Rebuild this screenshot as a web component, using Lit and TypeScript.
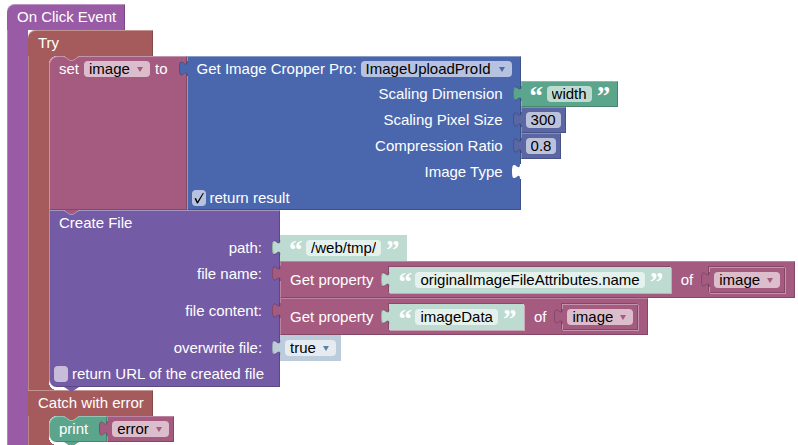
import { LitElement, html, css, svg, nothing } from "lit";
import { customElement } from "lit/decorators.js";

const notch = html`<svg class="notch" width="15" height="5" viewBox="0 0 15 5" aria-hidden="true">
  <path class="fill" d="M0 0L6 4H9L15 0Z" />
  <path class="edge" d="M0 .5L6 4.5H9L15 .5" />
</svg>`;

const foot = html`<svg class="foot" width="15" height="5" viewBox="0 0 15 5" aria-hidden="true">
  <path d="M0 0L6 4H9L15 0Z" />
</svg>`;

const tabShape = svg`<path class="fill" d="M8 15C8 5 0 23 0 7.5S8 10 8 0H9V15Z" />
  <path class="edge" d="M8 15C8 5 .5 23 .5 7.5S8 10 8 0" />`;
const tab = html`<svg class="tab" width="9" height="15" viewBox="0 0 9 15" aria-hidden="true">${tabShape}</svg>`;
const socket = html`<svg class="tab socket" width="9" height="15" viewBox="0 0 9 15" aria-hidden="true">${tabShape}</svg>`;

const pick = (value: string, name: string) => html`<span class="pick">
  <select aria-label=${name}><option>${value}</option></select>
  <svg width="6" height="5" viewBox="0 0 6 5" aria-hidden="true"><path d="M0 0H6L3 5Z" /></svg>
</span>`;

const field = (value: string, name: string) =>
  html`<input class="field" type="text" aria-label=${name} size=${value.length} .value=${value} />`;

const quoted = (value: string, name: string) => html`<span class="quote">“</span>${field(value, name)}<span class="quote">”</span>`;

const check = (text: string, on: boolean) => html`<label class="check">
  <span class="box">
    <input type="checkbox" ?checked=${on} />
    ${on
      ? html`<svg width="14" height="16" viewBox="0 0 14 16" aria-hidden="true">
          <path d="M2.5 8.6L4 8L5.5 11.6L11 2.8L11.8 3.2L5.9 13.4H5Z" />
        </svg>`
      : nothing}
  </span>
  ${text}
</label>`;

const property = (value: string) => html`<div class="value rose deep">
  ${tab}<span>Get property</span>
  <div class="value mint inset string">${tab}${quoted(value, "property name")}</div>
  <span>of</span>
  <div class="value rose inset">${tab}${pick("image", "object variable")}</div>
</div>`;

@customElement("app-root")
export class AppRoot extends LitElement {
  static styles = css`
    :host {
      display: block;
      height: 100vh;
      overflow: hidden;
      background: #fff;
      color: #fff;
      font: 15px/16px "Liberation Sans", Arial, sans-serif;
      white-space: nowrap;
    }
    * { box-sizing: border-box; }
    main { padding: 4px 0 0 7px; }

    .violet { --c: #995ba5; }
    .brick { --c: #a55b5b; }
    .rose { --c: #a55b80; }
    .blue { --c: #4a67ae; }
    .indigo { --c: #745ba5; }
    .green { --c: #5ba58c; }
    .slate { --c: #5b67a5; }
    .mint { --c: #bddbd1; }
    .sky { --c: #bdccdb; }

    .head {
      display: flex;
      align-items: center;
      width: max-content;
      height: 26px;
      padding: 0 9px 0 10px;
      background: var(--c);
      box-shadow: inset 0 1px #ffffff59, inset -1px 0 #00000033;
    }
    .cap { border-radius: 8px 0 0 0; }
    .brick > .head { min-width: 125px; }
    .arm {
      position: relative;
      border-left: 21px solid var(--c);
    }
    .arm::after {
      content: "";
      position: absolute;
      left: -21px;
      top: 0;
      bottom: 0;
      width: 1px;
      background: #ffffff40;
    }
    .stack { position: relative; padding-bottom: 3px; }
    .stack::before, .stack::after {
      content: "";
      position: absolute;
      left: 0;
      width: 8px;
      height: 8px;
      background: radial-gradient(circle at 8px 8px, transparent 8px, var(--c) 8px);
    }
    .stack::before { top: 0; }
    .stack::after {
      bottom: 0;
      background: radial-gradient(circle at 8px 0, transparent 8px, var(--c) 8px);
    }

    .step { position: relative; display: flex; width: max-content; }
    .body {
      background: var(--c);
      box-shadow: inset 1px 1px #ffffff59, inset -1px -1px #00000033;
    }
    .first > .body { border-top-left-radius: 8px; }
    .last > .body { border-bottom-left-radius: 8px; }
    .line {
      display: flex;
      align-items: center;
      gap: 5px;
      height: 26px;
      padding: 0 19px 0 10px;
    }

    .notch, .foot { position: absolute; left: 15px; }
    .notch { top: 0; z-index: 1; }
    .notch .fill { fill: var(--above); }
    .notch .edge { fill: none; stroke: #ffffff59; }
    .foot { top: 100%; fill: var(--c); z-index: 1; }
    .under-brick { --above: #a55b5b; }
    .under-rose { --above: #a55b80; }

    .value {
      position: relative;
      display: flex;
      align-items: center;
      gap: 9px;
      width: max-content;
      height: 26px;
      padding: 0 5px;
      background: var(--c);
      box-shadow: inset 1px 1px #ffffff40, inset -1px -1px #00000033;
    }
    .value.mint, .value.sky { box-shadow: none; }
    .value.string { padding: 0 9px; gap: 5px; }
    .value.deep { height: 37px; padding: 0 10px; gap: 10px; }
    .value.inset {
      margin-left: 6px;
      box-shadow: -1px -1px #0000002e, 1px 1px #ffffff73;
    }
    .value.rose.inset {
      box-shadow: inset 1px 1px #ffffff59, inset -1px -1px #00000033,
        -1px -1px #00000033, 1px 1px #ffffff59;
    }
    .tab { position: absolute; left: -8px; top: 5px; }
    .tab .fill { fill: var(--c); }
    .tab .edge { fill: none; stroke: #00000033; }
    .socket { left: auto; right: 0; }
    .socket .fill { fill: #fff; }
    .socket .edge { stroke: none; }

    .inputs { position: relative; display: grid; grid-template-columns: max-content max-content; }
    .inputs > .body {
      position: absolute;
      inset: 0;
      grid-column: 1 / 2;
    }
    .inputs > .line, .inputs > .value { position: relative; }
    .short { height: 25px; }
    .inputs > .line { grid-column: 1; }
    .blue > .line { padding-right: 9px; gap: 4px; }
    .name {
      position: relative;
      grid-column: 1;
      justify-self: end;
      line-height: 26px;
      height: 26px;
      padding-right: 18px;
    }
    .inputs > .value { grid-column: 2; }

    select, input { margin: 0; border: 0; outline: 0; font: inherit; color: #000; }
    select, .field {
      display: block;
      height: 16px;
      padding: 0 5px;
      border-radius: 4px;
      background: #ffffff99;
      appearance: none;
    }
    .field { field-sizing: content; }
    .pick { position: relative; display: block; --arrow: var(--c); }
    .sky .pick { --arrow: #5b80a5; }
    .pick select { padding-right: 20px; }
    .pick svg { position: absolute; right: 7px; top: 6px; fill: var(--arrow); pointer-events: none; }
    .quote {
      width: 12px;
      height: 16px;
      font: bold 27px/20px "Liberation Serif", serif;
    }

    .inputs > .ticked { padding: 0 16px 0 5px; }
    .check { display: flex; align-items: center; gap: 4px; }
    .box { position: relative; display: block; width: 14px; height: 16px; }
    .box input {
      display: block;
      width: 14px;
      height: 16px;
      border-radius: 4px;
      background: #ffffff99;
      appearance: none;
    }
    .box svg { position: absolute; left: 0; top: 0; pointer-events: none; }
  `;

  render() {
    return html`<main>
      <section class="violet">
        <div class="head cap">On Click Event</div>
        <div class="arm">
          <section class="brick">
            <div class="head cap">Try</div>
            <div class="arm">
              <div class="stack">
                <div class="step first rose under-brick">
                  ${notch}
                  <div class="body">
                    <div class="line"><span>set</span>${pick("image", "variable to set")}<span>to</span></div>
                  </div>
                  <div class="inputs blue">
                    <div class="body"></div>
                    ${tab}
                    <div class="line short">Get Image Cropper Pro: ${pick("ImageUploadProId", "cropper")}</div>
                    <div class="name">Scaling Dimension</div>
                    <div class="value green string">${tab}${quoted("width", "scaling dimension")}</div>
                    <div class="name">Scaling Pixel Size</div>
                    <div class="value slate">${tab}${field("300", "scaling pixel size")}</div>
                    <div class="name">Compression Ratio</div>
                    <div class="value slate">${tab}${field("0.8", "compression ratio")}</div>
                    <div class="name">Image Type${socket}</div>
                    <div class="line ticked short">${check("return result", true)}</div>
                  </div>
                </div>
                <div class="step last inputs indigo under-rose">
                  <div class="body"></div>
                  ${notch}
                  <div class="line short">Create File</div>
                  <div class="name">path:</div>
                  <div class="value mint string">${tab}${quoted("/web/tmp/", "path")}</div>
                  <div class="name">file name:</div>
                  ${property("originalImageFileAttributes.name")}
                  <div class="name">file content:</div>
                  ${property("imageData")}
                  <div class="name">overwrite file:</div>
                  <div class="value sky">${tab}${pick("true", "overwrite file")}</div>
                  <div class="line ticked">${check("return URL of the created file", false)}</div>
                  ${foot}
                </div>
              </div>
            </div>
            <div class="head">Catch with error</div>
            <div class="arm">
              <div class="stack">
                <div class="step first last green under-brick">
                  ${notch}
                  <div class="body"><div class="line">print</div></div>
                  <div class="value rose">${tab}${pick("error", "value to print")}</div>
                  ${foot}
                </div>
              </div>
            </div>
            <div class="head"></div>
          </section>
        </div>
      </section>
    </main>`;
  }
}
